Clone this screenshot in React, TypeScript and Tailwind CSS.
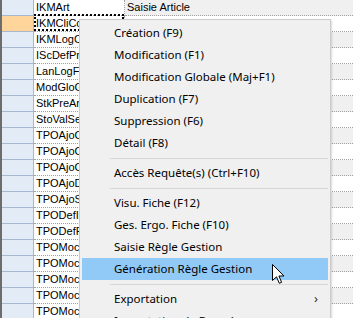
import React from "react";

const names = [
  "IKMArt", "IKMCliCo", "IKMLogC", "IScDefPr", "LanLogF", "ModGloG", "StkPreAr", "StoValSe",
  "TPOAjoC", "TPOAjoC", "TPOAjoC", "TPOAjoD", "TPOAjoS", "TPODefI", "TPODefF",
  "TPOMoc", "TPOMoc", "TPOMoc", "TPOMoc", "TPOMoc",
];

type Item = { label?: string; sep?: boolean; active?: boolean; sub?: boolean };

const menu: Item[] = [
  { label: "Création (F9)" },
  { label: "Modification (F1)" },
  { label: "Modification Globale (Maj+F1)" },
  { label: "Duplication (F7)" },
  { label: "Suppression (F6)" },
  { label: "Détail (F8)" },
  { sep: true },
  { label: "Accès Requête(s) (Ctrl+F10)" },
  { sep: true },
  { label: "Visu. Fiche (F12)" },
  { label: "Ges. Ergo. Fiche (F10)" },
  { label: "Saisie Règle Gestion" },
  { label: "Génération Règle Gestion", active: true },
  { sep: true },
  { label: "Exportation", sub: true },
  { label: "Importation de Données" },
];

function Cursor() {
  return (
    <svg width="13" height="21" viewBox="0 0 13 21" className="absolute left-[272px] top-[264px] z-30">
      <path d="M0.5 0.5 L0.5 16.5 L4.5 12.8 L7.3 19.3 L9.6 18.3 L6.9 12 L12 12 Z" fill="#fff" stroke="#000" strokeWidth="1" />
    </svg>
  );
}

export default function App() {
  return (
    <div className="relative w-[353px] h-[318px] overflow-hidden bg-white font-['Liberation_Sans',sans-serif]">
      <div className="flex flex-col">
        {names.map((n, i) => (
          <div key={i} className="flex h-4">
            <div className="w-[2px] bg-[#6d6d6d]" />
            <div className={`w-[32px] border-r border-b border-[#a6b7cf] ${i === 1 ? "bg-[#ffd59b]" : "bg-[#e3ebf6]"}`} />
            <div className="relative w-[90px] border-b border-dotted border-[#a0a0a0] pl-[2px] text-[11px] leading-[15px] text-black whitespace-nowrap">
              <div className="overflow-hidden">{n}</div>
              {i === 1 && <div className="absolute -top-[2px] left-0 right-0 bottom-0 border-2 border-dotted border-black" />}
            </div>
            <div className="w-px border-r border-dotted border-[#a0a0a0]" />
            <div className={`flex-1 border-b border-dotted border-[#a0a0a0] pl-[2px] text-[11px] leading-[15px] text-black whitespace-nowrap ${i % 2 === 0 ? "bg-[#f0f0f0]" : "bg-white"}`}>
              {i === 0 ? "Saisie Article" : ""}
            </div>
          </div>
        ))}
      </div>

      <div className="absolute left-[79px] top-[19px] w-[252px] border border-[#cccccc] bg-[#f0f0f0] p-[2px] shadow-[1px_1px_2px_rgba(0,0,0,0.15)] font-['Noto_Sans',sans-serif] text-[11.5px] text-black z-20">
        {menu.map((m, i) =>
          m.sep ? (
            <div key={i} className="h-2 flex items-center pl-[28px]">
              <div className="h-px w-full bg-[#d7d7d7]" />
            </div>
          ) : (
            <div key={i} className={`relative h-[22px] flex items-center pl-[32px] whitespace-nowrap ${m.active ? "bg-[#91c9f7]" : ""}`}>
              {m.label}
              {m.sub && <span className="absolute right-[10px] top-[1px] text-[13px] text-[#333]">›</span>}
            </div>
          )
        )}
      </div>
      <Cursor />
    </div>
  );
}
